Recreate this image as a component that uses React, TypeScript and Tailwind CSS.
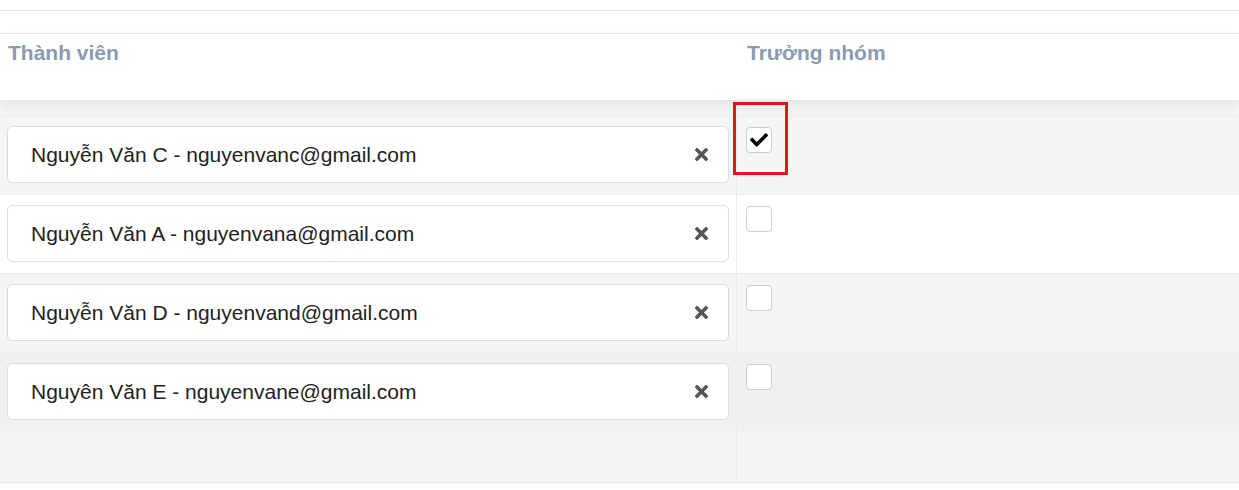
import React from "react";
import { FaTimes, FaCheck } from "react-icons/fa";

const members = [
  { name: "Nguyễn Văn C - nguyenvanc@gmail.com", leader: true, bg: "bg-[#f5f5f5]" },
  { name: "Nguyễn Văn A - nguyenvana@gmail.com", leader: false, bg: "bg-white" },
  { name: "Nguyễn Văn D - nguyenvand@gmail.com", leader: false, bg: "bg-[#f5f5f5]" },
  { name: "Nguyên Văn E - nguyenvane@gmail.com", leader: false, bg: "bg-[#f0f0f0]" },
];

export default function App() {
  return (
    <div className="w-[1239px] h-[490px] overflow-hidden bg-white font-['Liberation_Sans',Arial,sans-serif]">
      <div className="h-[11px] border-b border-[#e3e3e3]" />
      <div className="h-[23px] border-b border-[#e3e3e3]" />

      {/* header */}
      <div className="relative z-10 flex h-[66px] bg-white shadow-[0_6px_12px_rgba(0,0,0,0.07)]">
        <div className="w-[738px] pl-[8px] pt-[3px] text-[21px] font-bold text-[#8a9ab0]">
          Thành viên
        </div>
        <div className="flex-1 pl-[9px] pt-[3px] text-[21px] font-bold text-[#8a9ab0]">
          Trưởng nhóm
        </div>
      </div>

      {/* body */}
      <div className="relative bg-[#f5f5f5] pt-[15px]">
        {members.map((m) => (
          <div key={m.name} className={`flex h-[79px] border-t border-[#ececec] ${m.bg}`}>
            <div className="w-[737px] border-r border-[#ececec] pl-[7px] pr-[7px] pt-[10px]">
              <div className="flex h-[57px] items-center justify-between rounded-[5px] border border-[#dcdcdc] bg-white pl-[23px] pr-[17px] text-[21px] text-[#222]">
                <span>{m.name}</span>
                <FaTimes className="text-[#555]" size={19} />
              </div>
            </div>
            <div className="flex-1 pl-[9px] pt-[11px]">
              <div className="flex h-[26px] w-[26px] items-center justify-center rounded-[4px] border border-[#cfcfcf] bg-white">
                {m.leader && <FaCheck className="text-black" size={18} />}
              </div>
            </div>
          </div>
        ))}
        <div className="flex h-[52px] border-b border-[#e6e6e6]">
          <div className="w-[737px] border-r border-[#ececec]" />
          <div className="flex-1" />
        </div>

        {/* highlight on leader checkbox */}
        <div className="absolute left-[733px] top-[2px] h-[73px] w-[55px] border-[3px] border-[#e8141b]" />
      </div>
    </div>
  );
}
